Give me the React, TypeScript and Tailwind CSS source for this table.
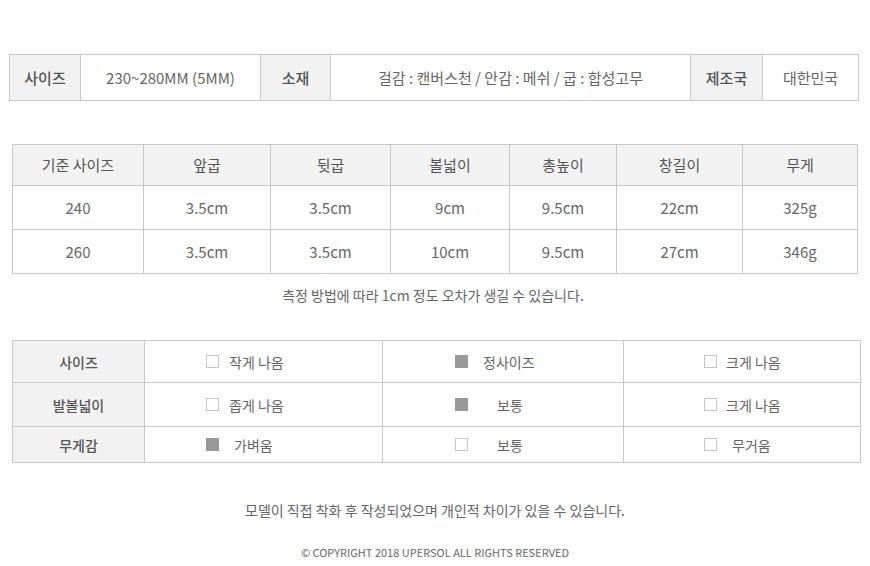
const font = { fontFamily: '"Noto Sans CJK KR", "Noto Sans", sans-serif' };

const sizeRows = [
  ["240", "3.5cm", "3.5cm", "9cm", "9.5cm", "22cm", "325g"],
  ["260", "3.5cm", "3.5cm", "10cm", "9.5cm", "27cm", "346g"],
];

const sizeHead = ["기준 사이즈", "앞굽", "뒷굽", "볼넓이", "총높이", "창길이", "무게"];
const sizeWidths = ["w-[131px]", "w-[127px]", "w-[120px]", "w-[119px]", "w-[107px]", "w-[126px]", "w-[115px]"];

type Opt = { on: boolean; label: string; gap: string };

const fitRows: { label: string; h: string; opts: Opt[] }[] = [
  {
    label: "사이즈",
    h: "h-[42px]",
    opts: [
      { on: false, label: "작게 나옴", gap: "gap-[10px]" },
      { on: true, label: "정사이즈", gap: "gap-[15px]" },
      { on: false, label: "크게 나옴", gap: "gap-[9px]" },
    ],
  },
  {
    label: "발볼넓이",
    h: "h-[44px]",
    opts: [
      { on: false, label: "좁게 나옴", gap: "gap-[10px]" },
      { on: true, label: "보통", gap: "gap-[29px]" },
      { on: false, label: "크게 나옴", gap: "gap-[9px]" },
    ],
  },
  {
    label: "무게감",
    h: "h-[36px]",
    opts: [
      { on: true, label: "가벼움", gap: "gap-[15px]" },
      { on: false, label: "보통", gap: "gap-[29px]" },
      { on: false, label: "무거움", gap: "gap-[15px]" },
    ],
  },
];

const optPad = ["pl-[61px]", "pl-[72px]", "pl-[80px]"];

function Box({ on }: { on: boolean }) {
  return on ? (
    <span className="inline-block w-[13px] h-[13px] bg-[#999999]" />
  ) : (
    <span className="inline-block w-[13px] h-[13px] border border-[#c4c4c4] bg-white" />
  );
}

export default function App() {
  return (
    <main className="w-[870px] h-[566px] bg-white text-[#666666] overflow-hidden" style={font}>
      {/* 기본 정보 */}
      <section className="pt-[54px] pl-[9px]">
        <table className="w-[850px] border-collapse text-[15px] leading-[20px]">
          <tbody>
            <tr className="h-[46px]">
              <td className="w-[71px] border border-[#c8c8c8] bg-[#f2f2f2] text-center font-medium text-[#555555]">사이즈</td>
              <td className="w-[180px] border border-[#c8c8c8] text-center">230~280MM (5MM)</td>
              <td className="w-[70px] border border-[#c8c8c8] bg-[#f2f2f2] text-center font-medium text-[#555555]">소재</td>
              <td className="w-[360px] border border-[#c8c8c8] text-center">걸감 : 캔버스천 / 안감 : 메쉬 / 굽 : 합성고무</td>
              <td className="w-[72px] border border-[#c8c8c8] bg-[#f2f2f2] text-center font-medium text-[#555555]">제조국</td>
              <td className="border border-[#c8c8c8] text-center">대한민국</td>
            </tr>
          </tbody>
        </table>
      </section>

      {/* 사이즈 상세 */}
      <section className="pt-[43px] pl-[12px]">
        <table className="w-[846px] border-collapse text-[15px] leading-[20px]">
          <thead>
            <tr className="h-[41px] bg-[#f2f2f2]">
              {sizeHead.map((h, i) => (
                <th key={h} className={`${sizeWidths[i]} border border-[#c8c8c8] font-normal text-[#555555]`}>
                  {h}
                </th>
              ))}
            </tr>
          </thead>
          <tbody>
            {sizeRows.map((r) => (
              <tr key={r[0]} className="h-[44px]">
                {r.map((c, i) => (
                  <td key={i} className="border border-[#c8c8c8] text-center">
                    {c}
                  </td>
                ))}
              </tr>
            ))}
          </tbody>
        </table>
        <p className="mt-[11px] text-center text-[14px] leading-[20px] text-[#666666] pr-[16px]">
          측정 방법에 따라 1cm 정도 오차가 생길 수 있습니다.
        </p>
      </section>

      {/* 착용감 */}
      <section className="pt-[35px] pl-[12px]">
        <table className="w-[849px] border-collapse text-[14px] leading-[20px]">
          <tbody>
            {fitRows.map((row) => (
              <tr key={row.label} className={row.h}>
                <td className="w-[132px] border border-[#c8c8c8] bg-[#f2f2f2] text-center font-medium text-[#555555]">
                  {row.label}
                </td>
                {row.opts.map((o, i) => (
                  <td
                    key={i}
                    className={`${i === 0 ? "w-[238px]" : i === 1 ? "w-[241px]" : ""} border border-[#c8c8c8]`}
                  >
                    <div className={`flex items-center ${optPad[i]} ${o.gap}`}>
                      <Box on={o.on} />
                      <span>{o.label}</span>
                    </div>
                  </td>
                ))}
              </tr>
            ))}
          </tbody>
        </table>
      </section>

      <footer className="pt-[37px] text-center">
        <p className="text-[14px] leading-[20px] text-[#666666]">모델이 직접 착화 후 작성되었으며 개인적 차이가 있을 수 있습니다.</p>
        <p className="mt-[24px] text-[11px] leading-[16px] text-[#666666]">© COPYRIGHT 2018 UPERSOL ALL RIGHTS RESERVED</p>
      </footer>
    </main>
  );
}
